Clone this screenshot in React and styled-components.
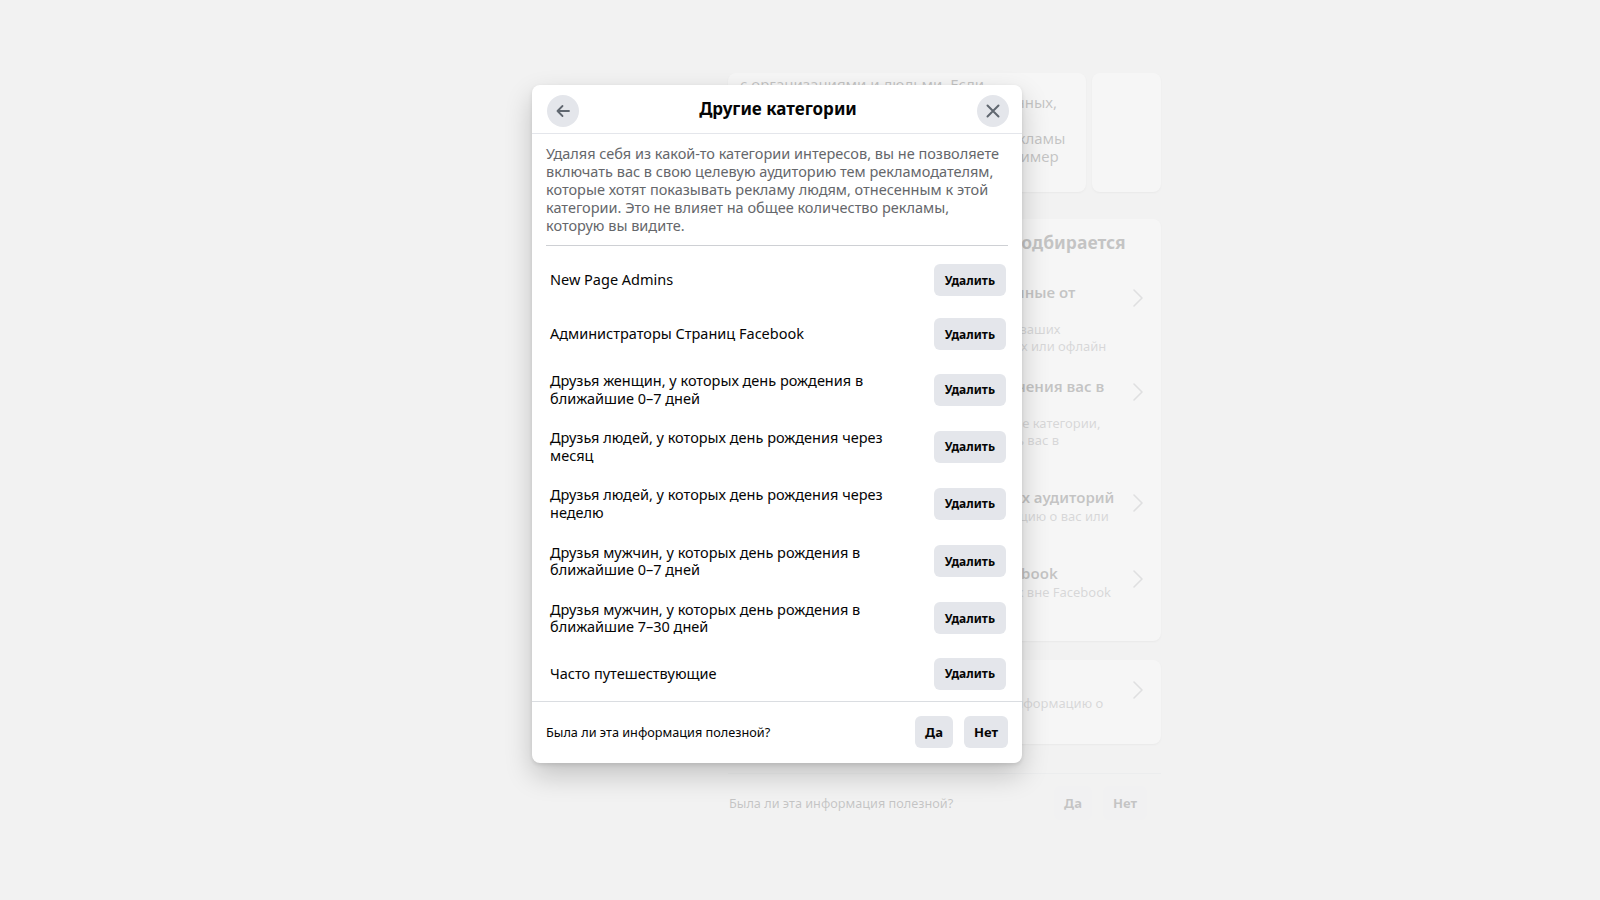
import React from "react";
import styled, { createGlobalStyle } from "styled-components";

const FONT = `"Noto Sans", "Open Sans", Roboto, sans-serif`;

const GlobalStyle = createGlobalStyle`
  html, body {
    margin: 0;
    padding: 0;
  }
  body {
    background: #eaeaea;
    font-family: ${FONT};
    color: #050505;
    -webkit-font-smoothing: antialiased;
  }
  * {
    box-sizing: border-box;
  }
`;

/* ---------- page behind the dialog ---------- */

const Page = styled.div`
  position: relative;
  width: 1600px;
  height: 900px;
  overflow: hidden;
  background: #eaeaea;
`;

const Column = styled.div`
  width: 433px;
  margin-left: 728px;
  padding-top: 73px;
`;

const CardRow = styled.div`
  display: grid;
  grid-template-columns: 358px 1fr;
  gap: 6px;
  height: 119px;
`;

const Card = styled.div`
  background: #fff;
  border-radius: 8px;
  box-shadow: 0 1px 2px rgba(0, 0, 0, 0.2);
  padding: ${(p) => p.$pad || "12px 17px 12px 16px"};
  margin-top: ${(p) => p.$mt || 0}px;
  overflow: hidden;
`;

const CardText = styled.div`
  font-size: 15px;
  line-height: 18px;
  color: #050505;
  white-space: nowrap;
`;

const CardHeading = styled.div`
  font-size: 17.5px;
  font-weight: 700;
  line-height: 22px;
  margin-bottom: 19px;
  white-space: nowrap;
`;

const Item = styled.div`
  display: flex;
  align-items: flex-start;
  justify-content: space-between;
  padding: ${(p) => p.$pad || "11px 0"};
`;

const ItemTitle = styled.div`
  font-size: 15px;
  font-weight: 600;
  line-height: 18px;
  white-space: nowrap;
`;

const ItemDesc = styled.div`
  margin-top: 2px;
  font-size: 13px;
  line-height: 17px;
  color: #65676b;
  white-space: nowrap;
`;

const Chevron = styled.svg`
  flex: none;
  margin-top: 5px;
  width: 12px;
  height: 20px;
`;

const PageFooter = styled.div`
  margin-top: 29px;
  border-top: 1px solid #ced0d4;
  padding: 12px 14px 0 1px;
  display: flex;
  align-items: center;
  justify-content: space-between;
  font-size: 12.7px;
  color: #050505;
`;

/* ---------- overlay + dialog ---------- */

const Overlay = styled.div`
  position: absolute;
  inset: 0;
  background: rgba(244, 244, 244, 0.8);
  padding: 85px 0 0 532px;
`;

const Modal = styled.div`
  width: 490px;
  background: #fff;
  border-radius: 8px;
  box-shadow: 0 12px 28px 0 rgba(0, 0, 0, 0.2), 0 2px 4px 0 rgba(0, 0, 0, 0.1);
  overflow: hidden;
`;

const Header = styled.div`
  display: grid;
  grid-template-columns: 32px 1fr 32px;
  align-items: center;
  height: 49px;
  padding: 0 13px 1px 15px;
  border-bottom: 1px solid #e4e6eb;
`;

const RoundButton = styled.button`
  width: 32px;
  height: 32px;
  margin-top: 4px;
  border: none;
  border-radius: 50%;
  background: #e4e6eb;
  display: flex;
  align-items: center;
  justify-content: center;
  padding: 0;
  cursor: pointer;
`;

const Title = styled.h2`
  margin: 0;
  text-align: center;
  font-size: 17px;
  font-weight: 700;
  line-height: 24px;
  color: #050505;
`;

const Body = styled.div`
  padding: 0 14px;
`;

const Description = styled.p`
  margin: 0;
  padding: 10px 0 11px;
  border-bottom: 1px solid #ced0d4;
  font-size: 14.5px;
  line-height: 18px;
  color: #65676b;
`;

const List = styled.div`
  padding-top: 7px;
`;

const Row = styled.div`
  display: flex;
  align-items: center;
  justify-content: space-between;
  gap: 12px;
  padding: 11px 2px 11px 4px;
`;

const RowText = styled.div`
  max-width: 345px;
  font-size: 14.5px;
  line-height: 17.6px;
  color: #050505;
`;

const GrayButton = styled.button`
  flex: none;
  height: ${(p) => p.$h || 32}px;
  padding: 0 ${(p) => p.$px || 11}px;
  border: none;
  border-radius: 6px;
  background: #e4e6eb;
  font-family: ${FONT};
  font-size: ${(p) => p.$fs || 13}px;
  font-weight: 700;
  color: #050505;
  cursor: pointer;
`;

const Footer = styled.div`
  display: flex;
  align-items: center;
  justify-content: space-between;
  height: 62px;
  padding: 0 14px;
  border-top: 1px solid #dadde1;
  font-size: 12.7px;
  color: #050505;
`;

const ButtonGroup = styled.div`
  display: flex;
  gap: 11px;
`;

const categories = [
  "New Page Admins",
  "Администраторы Страниц Facebook",
  "Друзья женщин, у которых день рождения в ближайшие 0–7 дней",
  "Друзья людей, у которых день рождения через месяц",
  "Друзья людей, у которых день рождения через неделю",
  "Друзья мужчин, у которых день рождения в ближайшие 0–7 дней",
  "Друзья мужчин, у которых день рождения в ближайшие 7–30 дней",
  "Часто путешествующие",
];

const bgItems = [
  {
    title: ["Данные о ваших действиях, полученные от", "рекламодателей и партнеров"],
    desc: [
      "Рекламодатели делятся данными в основе ваших",
      "действий на их сайтах, в своих приложениях или офлайн",
    ],
  },
  {
    title: ["Категории, используемые для включения вас в", "аудитории"],
    desc: [
      "Мы можем учитывать ваши данные и другие категории,",
      "чтобы рекламодатели могли легко охватить вас в",
      "своих кампаниях",
    ],
  },
  {
    title: ["Применение ваших индивидуальных аудиторий"],
    desc: [
      "Рекламодатель загрузил список и информацию о вас или",
      "использовал данные о ваших действиях",
    ],
  },
  {
    title: ["Данные о ваших действиях вне Facebook"],
    desc: [
      "Данные о действиях в приложении и сайтах вне Facebook",
      "которые передают нам компании",
    ],
  },
];

const Lines = ({ lines }) =>
  lines.map((l, i) => (
    <React.Fragment key={i}>
      {l}
      {i < lines.length - 1 && <br />}
    </React.Fragment>
  ));

const ChevronIcon = () => (
  <Chevron viewBox="0 0 12 20" fill="none">
    <path d="M2 2l8 8-8 8" stroke="#8a8d91" strokeWidth="1.6" strokeLinecap="round" strokeLinejoin="round" />
  </Chevron>
);

const BgItem = ({ title, desc }) => (
  <Item>
    <div>
      <ItemTitle>
        <Lines lines={title} />
      </ItemTitle>
      <ItemDesc>
        <Lines lines={desc} />
      </ItemDesc>
    </div>
    <ChevronIcon />
  </Item>
);

const BackgroundPage = () => (
  <Column>
    <CardRow>
      <Card $pad="2px 12px">
        <CardText>
          <Lines
            lines={[
              "с организациями и людьми. Если",
              "Показываем рекламу на основе их данных,",
              "полученных от рекламодателей.",
              "Это сведения о просмотре вами их рекламы",
              "в приложениях или на их сайтах, например",
            ]}
          />
        </CardText>
      </Card>
      <Card />
    </CardRow>

    <Card $mt={27}>
      <CardHeading>Как реклама в ваших лентах подбирается</CardHeading>
      {bgItems.map((it, i) => (
        <BgItem key={i} {...it} />
      ))}
    </Card>

    <Card $mt={19} $pad="4px 17px 4px 16px">
      <Item>
        <div>
          <ItemTitle>Что вы можете сделать</ItemTitle>
          <ItemDesc>
            <Lines lines={["Вы можете посмотреть и легко изменить информацию о", "себе в настройках"]} />
          </ItemDesc>
        </div>
        <ChevronIcon />
      </Item>
    </Card>

    <PageFooter>
      <span>Была ли эта информация полезной?</span>
      <ButtonGroup>
        <GrayButton $h={34} $px={10}>Да</GrayButton>
        <GrayButton $h={34} $px={10}>Нет</GrayButton>
      </ButtonGroup>
    </PageFooter>
  </Column>
);

const BackIcon = () => (
  <svg width="16" height="16" viewBox="0 0 16 16" fill="none">
    <path
      d="M14 8H2.5M7.5 3L2.5 8l5 5"
      stroke="#606770"
      strokeWidth="1.8"
      strokeLinecap="round"
      strokeLinejoin="round"
    />
  </svg>
);

const CloseIcon = () => (
  <svg width="16" height="16" viewBox="0 0 16 16" fill="none">
    <path d="M2.5 2.5l11 11M13.5 2.5l-11 11" stroke="#606770" strokeWidth="2" strokeLinecap="round" />
  </svg>
);

export default function App() {
  return (
    <>
      <GlobalStyle />
      <Page>
        <BackgroundPage />
        <Overlay>
          <Modal>
            <Header>
              <RoundButton aria-label="Назад">
                <BackIcon />
              </RoundButton>
              <Title>Другие категории</Title>
              <RoundButton aria-label="Закрыть">
                <CloseIcon />
              </RoundButton>
            </Header>
            <Body>
              <Description>
                Удаляя себя из какой-то категории интересов, вы не позволяете включать вас в свою
                целевую аудиторию тем рекламодателям, которые хотят показывать рекламу людям,
                отнесенным к этой категории. Это не влияет на общее количество рекламы, которую вы
                видите.
              </Description>
              <List>
                {categories.map((c) => (
                  <Row key={c}>
                    <RowText>{c}</RowText>
                    <GrayButton $fs={12}>Удалить</GrayButton>
                  </Row>
                ))}
              </List>
            </Body>
            <Footer>
              <span>Была ли эта информация полезной?</span>
              <ButtonGroup>
                <GrayButton $px={10}>Да</GrayButton>
                <GrayButton $px={10}>Нет</GrayButton>
              </ButtonGroup>
            </Footer>
          </Modal>
        </Overlay>
      </Page>
    </>
  );
}
